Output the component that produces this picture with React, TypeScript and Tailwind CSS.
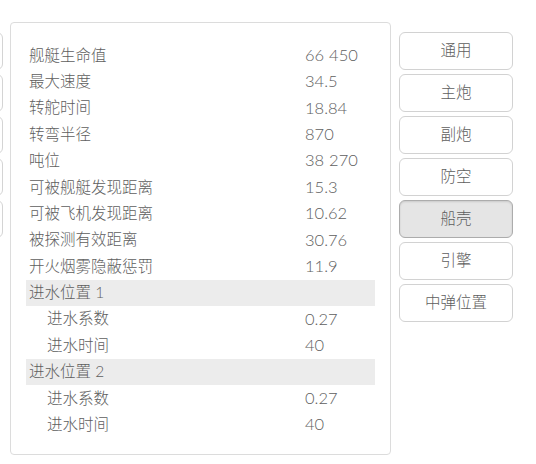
import React from "react";

type Row = { label: string; value?: string; kind: "main" | "header" | "sub" };

const rows: Row[] = [
  { label: "舰艇生命值", value: "66 450", kind: "main" },
  { label: "最大速度", value: "34.5", kind: "main" },
  { label: "转舵时间", value: "18.84", kind: "main" },
  { label: "转弯半径", value: "870", kind: "main" },
  { label: "吨位", value: "38 270", kind: "main" },
  { label: "可被舰艇发现距离", value: "15.3", kind: "main" },
  { label: "可被飞机发现距离", value: "10.62", kind: "main" },
  { label: "被探测有效距离", value: "30.76", kind: "main" },
  { label: "开火烟雾隐蔽惩罚", value: "11.9", kind: "main" },
  { label: "进水位置 1", kind: "header" },
  { label: "进水系数", value: "0.27", kind: "sub" },
  { label: "进水时间", value: "40", kind: "sub" },
  { label: "进水位置 2", kind: "header" },
  { label: "进水系数", value: "0.27", kind: "sub" },
  { label: "进水时间", value: "40", kind: "sub" },
];

const tabs = ["通用", "主炮", "副炮", "防空", "船壳", "引擎", "中弹位置"];

export default function App() {
  return (
    <div
      className="w-[536px] h-[464px] bg-white overflow-hidden text-[#5e5e5e] font-light"
      style={{ fontFamily: 'Lato, "Noto Sans CJK SC", sans-serif' }}
    >
      <div className="flex items-start pt-[22px]">
        <div className="flex flex-col gap-[4px] ml-[-111px] mt-[10px] w-[114px] shrink-0">
          {[0, 1, 2, 3, 4].map((i) => (
            <div key={i} className="h-[38px] rounded-[6px] border border-[#d4d4d4] bg-white" />
          ))}
        </div>
        <div className="ml-[7px] w-[381px] h-[433px] shrink-0 rounded-[4px] border border-[#dcdcdc] pl-[15px] pr-[15px] pt-[19px]">
          <div className="flex flex-col">
            {rows.map((r, i) => (
              <div
                key={i}
                className={
                  "flex items-center h-[26.4px] text-[15.5px] " +
                  (r.kind === "header" ? "bg-[#ececec]" : "")
                }
              >
                <div className={r.kind === "sub" ? "pl-[21px] w-[279px]" : "pl-[3px] w-[279px]"}>
                  {r.label}
                </div>
                <div className="text-[16.5px] [word-spacing:0.5px]">{r.value ?? ""}</div>
              </div>
            ))}
          </div>
        </div>
        <div className="ml-[8px] mt-[10px] flex flex-col gap-[4px] w-[114px] shrink-0">
          {tabs.map((t) => (
            <div
              key={t}
              className={
                "h-[38px] rounded-[6px] flex items-center justify-center text-[15.5px] " +
                (t === "船壳"
                  ? "bg-[#e5e5e5] border border-[#acacac] shadow-[inset_0_1px_2px_rgba(0,0,0,0.12)]"
                  : "bg-white border border-[#d2d2d2]")
              }
            >
              {t}
            </div>
          ))}
        </div>
      </div>
    </div>
  );
}
